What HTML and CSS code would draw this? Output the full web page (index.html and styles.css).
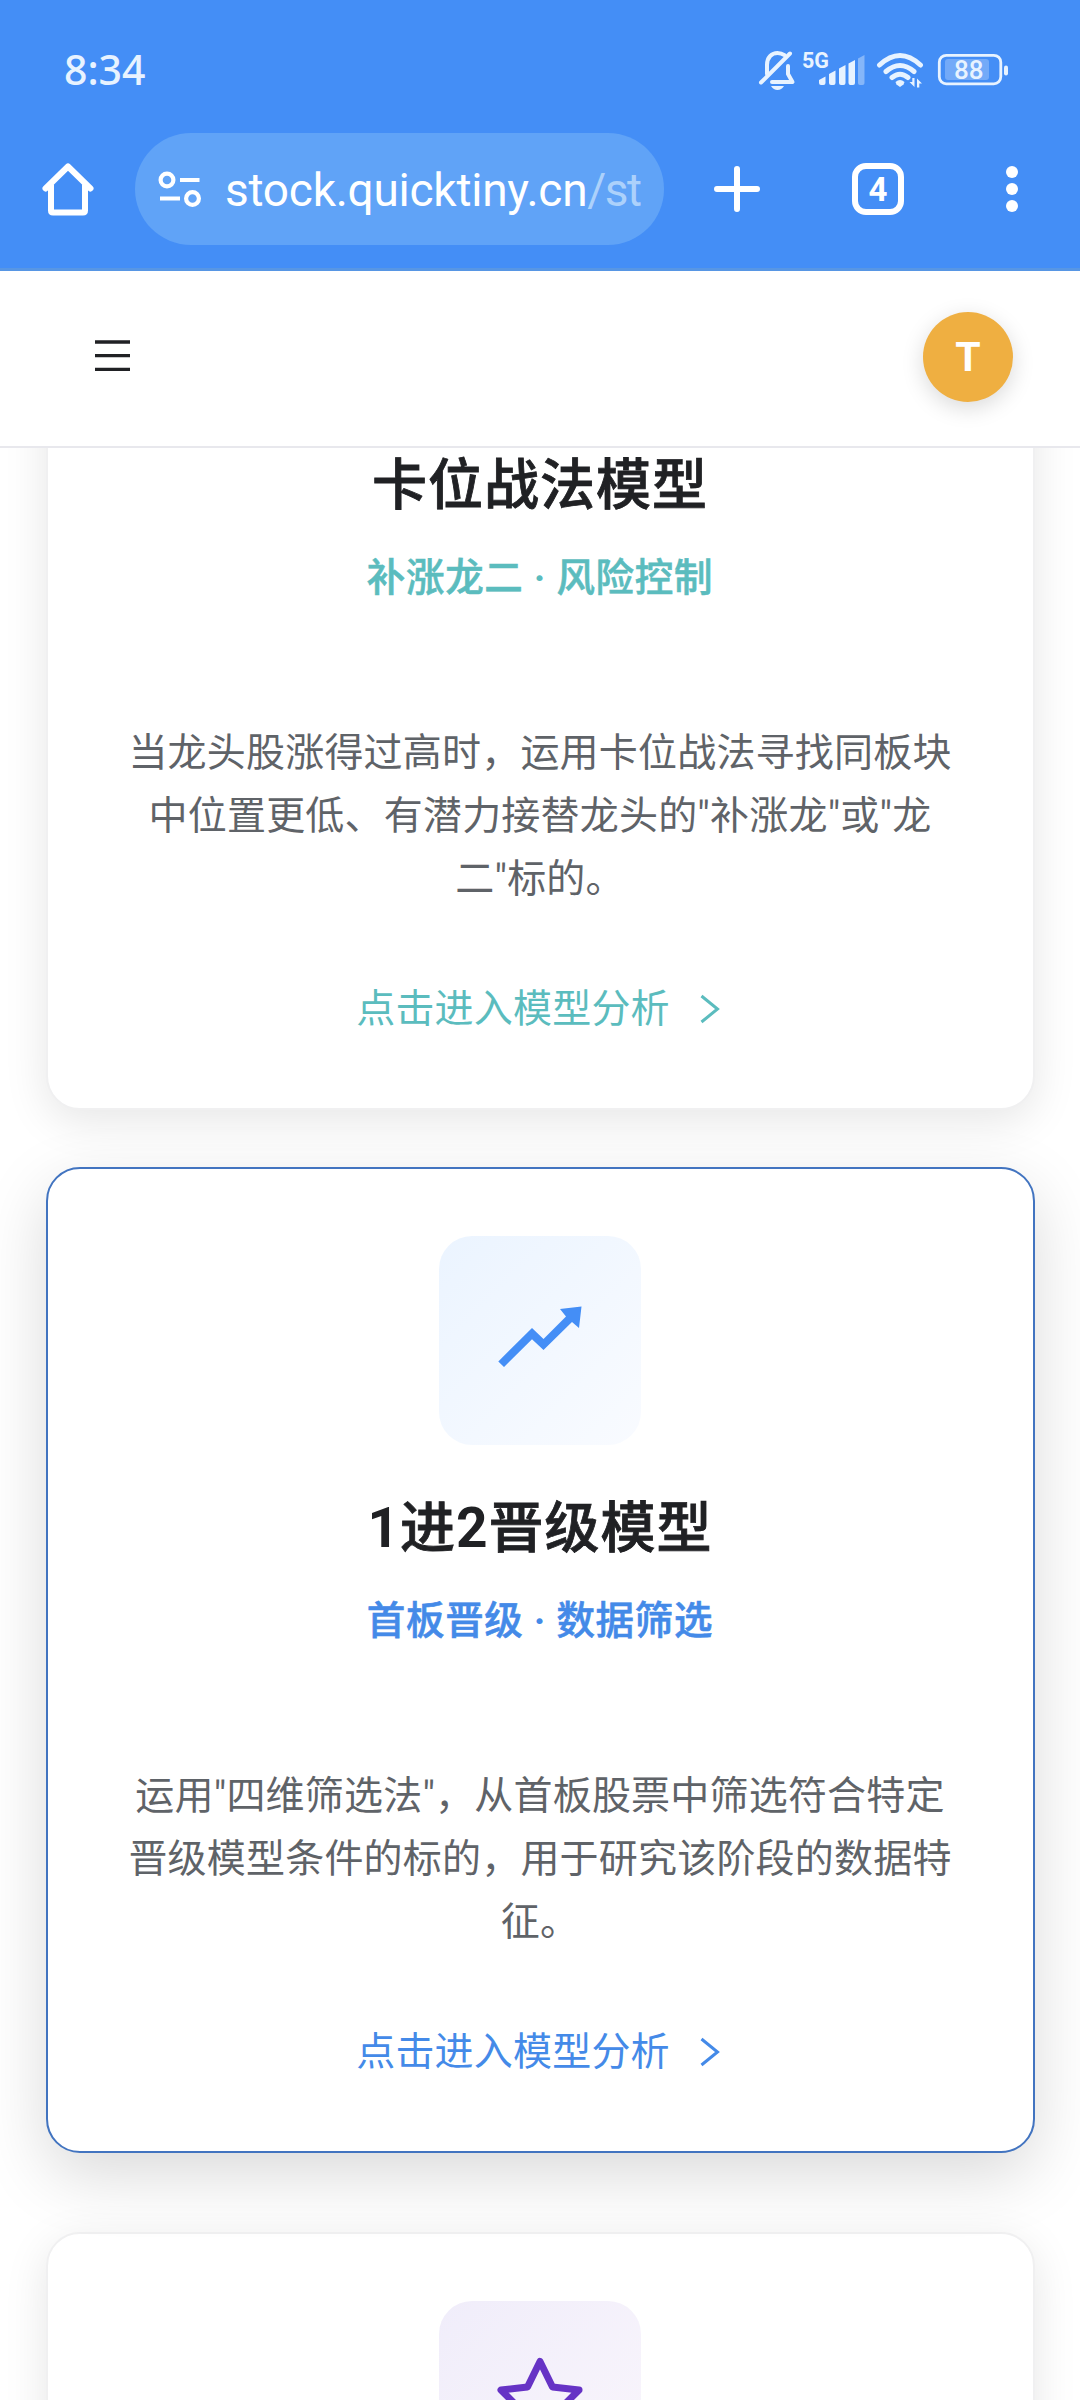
FILE: index.html
```html
<!DOCTYPE html>
<html lang="zh-CN">
<head>
<meta charset="utf-8">
<title>模型分析</title>
<link rel="stylesheet" href="styles.css">
</head>
<body>
<div class="screen">
  <div class="browser">
    <div class="status">
      <span class="clock">8:34</span>
      <svg class="status-icons" width="254" height="44" viewBox="756 48 254 44" fill="none">
        <g stroke="#e8f3ff" stroke-width="4" stroke-linecap="round" stroke-linejoin="round">
          <path d="M767 74V65c0-8 5-12 10.500-12 3 0 5 .8 7 2.200M788 66v8l4.500 8H772"/>
          <path d="M761 82.500L790 53.500"/>
        </g>
        <path d="M771 86h13c-1.500 2.800-4 4-6.500 4s-5-1.200-6.500-4z" fill="#e8f3ff"/>
        <text x="802" y="67.500" class="net">5G</text>
        <g fill="#e8f3ff">
          <path d="M819 80l6.500-3.500v6.500q0 2-2 2h-2.500q-2 0-2-2zM829 74l6.500-3.500v12.500q0 2-2 2h-2.500q-2 0-2-2zM839 68.500l6.500-3.500v18q0 2-2 2h-2.500q-2 0-2-2zM848.500 63.500l6.500-3.500v23q0 2-2 2h-2.500q-2 0-2-2z"/>
          <path opacity=".4" d="M858 58.500l6.500-3.500v28q0 2-2 2h-2.500q-2 0-2-2z"/>
          <path d="M895.500 82q4.500-4 9 0l-1 2.500-3.500 2.500-3.500-2.500z"/>
          <path d="M914.500 78v9l-5-5h2.800v-4zM917 87.500v-9l5 5h-2.700v4z"/>
        </g>
        <g stroke="#e8f3ff" stroke-width="5" stroke-linecap="round">
          <path d="M879.500 65q20.500-19 41 0M886 71.500q14-12 28 0M892 77.500q8-6.500 16 0"/>
        </g>
        <rect x="939.300" y="55.300" width="61.500" height="28.500" rx="7" stroke="#e8f3ff" stroke-width="2.800"/>
        <rect x="945" y="59" width="44" height="21" rx="3" fill="#fff" opacity=".25"/>
        <path d="M1006 67.500v6" stroke="#e8f3ff" stroke-width="4" stroke-linecap="round"/>
        <text x="954" y="79" class="batt">88</text>
      </svg>
    </div>
    <div class="toolbar">
      <svg class="home" width="52" height="54" viewBox="0 0 52 54" fill="none" stroke="#fff" stroke-width="6" stroke-linejoin="round" stroke-linecap="round"><path d="M3.500 26.500L26 4.500l22.500 22M9 23v25.500q0 2 2 2h30q2 0 2-2V23"/></svg>
      <div class="url">
        <svg width="44" height="38" viewBox="0 0 44 38" fill="none" stroke="#fff" stroke-width="4.200"><circle cx="9" cy="10" r="6.400"/><circle cx="34.500" cy="28.500" r="6.400"/><path d="M22 10h19.500M2 28.500h20"/></svg>
        <div class="address">stock.quicktiny.cn<span>/str</span></div>
      </div>
      <svg class="plus" width="46" height="46" viewBox="0 0 46 46" stroke="#fff" stroke-width="6" stroke-linecap="round"><path d="M3 23h40M23 3v40"/></svg>
      <div class="tabs">4</div>
      <svg class="dots" width="12" height="46" viewBox="0 0 12 46" fill="#fff"><circle cx="6" cy="6" r="6"/><circle cx="6" cy="23" r="6"/><circle cx="6" cy="40" r="6"/></svg>
    </div>
  </div>
  <header class="header">
    <svg class="menu" width="35" height="32" viewBox="0 0 35 32" stroke="#202124" stroke-width="3.300"><path d="M0 2h35M0 15.700h35M0 29.400h35"/></svg>
    <div class="avatar">T</div>
  </header>
  <main class="cards">
    <section class="card teal">
      <div class="tile"></div>
      <h2>卡位战法模型</h2>
      <h3>补涨龙二 <b>·</b> 风险控制</h3>
      <p>当龙头股涨得过高时，运用卡位战法寻找同板块<br>中位置更低、有潜力接替龙头的"补涨龙"或"龙<br>二"标的。</p>
      <a class="more">点击进入模型分析<svg width="20" height="30" viewBox="0 0 20 30" fill="none" stroke="currentColor" stroke-width="3"><path d="M1.500 2L17.500 15 1.500 28"/></svg></a>
    </section>
    <section class="card blue active">
      <div class="tile"><svg width="84" height="61" viewBox="498 1306 84 61" fill="#448ef6"><path d="M498.300 1361.500L532 1328l11.500 11 22.500-22.500-6-7.500 21.500-2.500-2.500 21.500-7-6L543.500 1350 532 1339.200 504 1367z"/></svg></div>
      <h2><b>1</b>进<b>2</b>晋级模型</h2>
      <h3>首板晋级 <b>·</b> 数据筛选</h3>
      <p>运用"四维筛选法"，从首板股票中筛选符合特定<br>晋级模型条件的标的，用于研究该阶段的数据特<br>征。</p>
      <a class="more">点击进入模型分析<svg width="20" height="30" viewBox="0 0 20 30" fill="none" stroke="currentColor" stroke-width="3"><path d="M1.500 2L17.500 15 1.500 28"/></svg></a>
    </section>
    <section class="card purple">
      <div class="tile"><svg width="88" height="88" viewBox="0 0 88 88" fill="none" stroke="#6633c5" stroke-width="7" stroke-linejoin="round"><path d="M44 6.500l12.500 25.500 26.500 3-20 20 5 28-24-13-24 13 5-28L5 35l26.500-3z"/></svg></div>
    </section>
  </main>
</div>
</body>
</html>
```
FILE: styles.css
```css
* { box-sizing: border-box; margin: 0; padding: 0; }
body { background: #fff; font-family: Roboto, "Noto Sans CJK SC", sans-serif; }
.screen { width: 1080px; height: 2400px; overflow: hidden; display: flex; flex-direction: column; }
svg { flex: none; display: block; }

.browser { position: relative; z-index: 2; height: 271px; flex: none; background: #448ef6; border-bottom: 3px solid #5796e4; }
.status { height: 133px; display: flex; justify-content: space-between; padding: 48px 70px 0 64px; }
.clock { font: 500 41px/42px "Noto Sans", sans-serif; color: #e8f3ff; }
.net { font: 700 21.500px Roboto, sans-serif; fill: #e8f3ff; }
.batt { font: 500 26px Roboto, sans-serif; fill: #e8f3ff; }
.toolbar { height: 112px; display: flex; align-items: center; padding-left: 42px; }
.url { width: 529px; height: 112px; margin-left: 41px; padding-left: 23px; border-radius: 56px; background: #60a3f7; display: flex; align-items: center; }
.address { margin: 2px 0 0 23px; width: 416px; overflow: hidden; white-space: nowrap; color: #fff; font: 400 46px/60px Roboto, sans-serif; letter-spacing: -.25px; }
.address span { color: #acd1fb; letter-spacing: -1.500px; }
.plus { margin-left: 50px; }
.tabs { width: 52px; height: 52px; margin-left: 92px; border: 6px solid #fff; border-radius: 14px; color: #fff; text-align: center; font: 700 33px/41px Roboto, sans-serif; }
.dots { margin-left: 102px; }

.header { position: relative; z-index: 1; height: 177px; flex: none; display: flex; justify-content: space-between; align-items: center; padding: 0 67px 0 95px; background: #fff; border-bottom: 2px solid #e8e8ed; }
.menu { margin-bottom: 5px; }
.avatar { width: 90px; height: 90px; margin-bottom: 3px; border-radius: 50%; background: #efaf41; color: #fff; text-align: center; font: 700 41px/90px Roboto, sans-serif; box-shadow: 0 6px 22px rgba(0,0,0,.15); }

.cards { display: flex; flex-direction: column; gap: 68px; margin-top: -324px; padding: 0 45.500px; }
.card { height: 986px; flex: none; padding-top: 67px; border: 2px solid #f0f0f1; border-radius: 34px; background: #fff; box-shadow: 0 11px 44px rgba(0,0,0,.1); display: flex; flex-direction: column; align-items: center; white-space: nowrap; text-align: center; }
.card.active { transform: translateY(-11px); border-color: #4274c0; box-shadow: 0 22px 66px rgba(0,0,0,.15); }
.tile { width: 202px; height: 209px; border-radius: 33px; display: flex; align-items: center; justify-content: center; }
.blue .tile { background: linear-gradient(135deg, #ebf4ff, #f9fbff); }
.blue .tile svg { margin-bottom: 9px; }
.purple .tile { background: linear-gradient(135deg, #f0edfa, #faf6fc); }
.purple .tile svg { margin-bottom: 13px; }
h2 { margin-top: 45px; font-size: 55px; line-height: 76px; font-weight: 500; letter-spacing: 1px; color: #202124; -webkit-text-stroke: .8px currentColor; }
h3 { margin-top: 24px; font-size: 38.500px; line-height: 62px; font-weight: 500; letter-spacing: .7px; -webkit-text-stroke: .6px currentColor; }
b { font-weight: 700; -webkit-text-stroke: 0; }
p { margin-top: 113px; font-size: 39px; line-height: 63px; letter-spacing: .2px; color: #5f6368; }
.more { margin: 67px 4px 0 0; font-size: 39px; line-height: 62px; letter-spacing: .2px; display: flex; align-items: center; gap: 30px; }
.teal h3, .teal .more { color: #5bbcbe; }
.blue h3, .blue .more { color: #448ae8; }
```
